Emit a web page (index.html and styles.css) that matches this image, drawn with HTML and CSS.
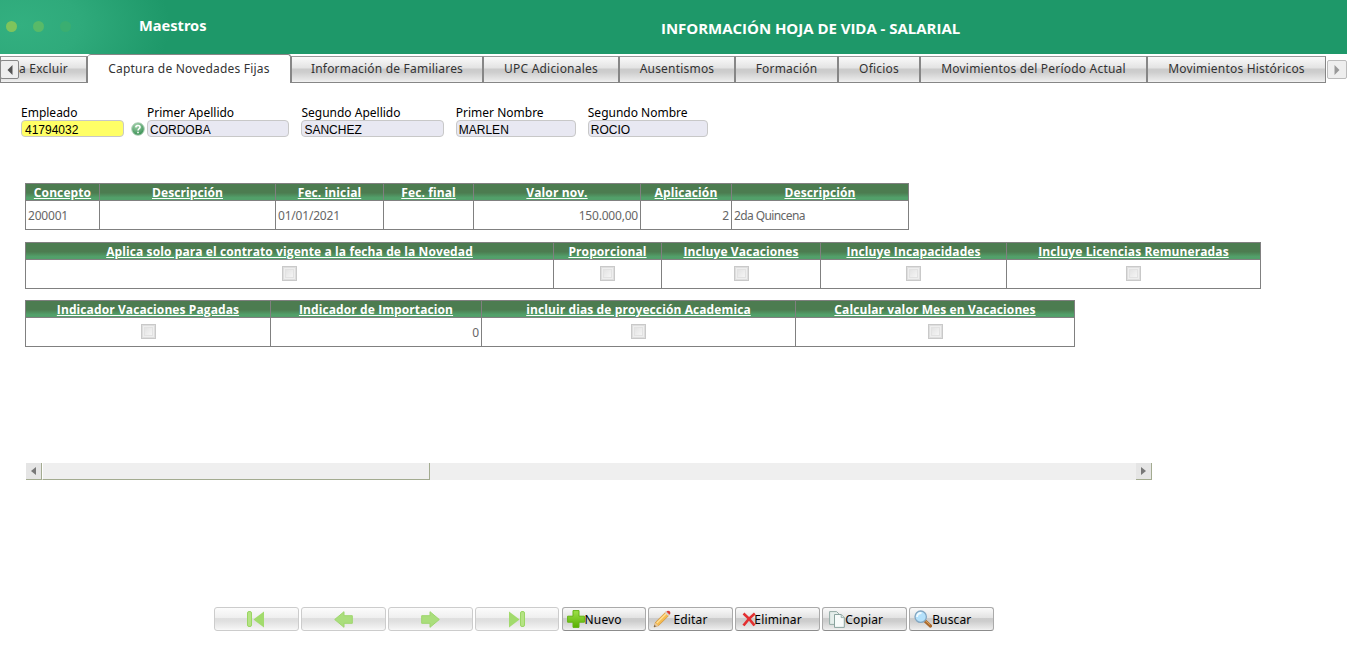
FILE: index.html
```html
<!DOCTYPE html>
<html lang="es">
<head>
  <meta charset="UTF-8" />
  <title>Información Hoja de Vida - Salarial</title>
  <link rel="stylesheet" href="styles.css">
</head>
<body>
  <header class="header">
    <div class="dots"><i></i><i></i><i></i></div>
    <div class="module">Maestros</div>
    <h1>INFORMACIÓN HOJA DE VIDA - SALARIAL</h1>
  </header>

  <nav class="tabs">
    <div class="tab w-excluir"><span>a Excluir</span></div>
    <div class="tab active w-captura"><span>Captura de Novedades Fijas</span></div>
    <div class="tab w-familiares"><span>Información de Familiares</span></div>
    <div class="tab w-upc"><span>UPC Adicionales</span></div>
    <div class="tab w-ausentismos"><span>Ausentismos</span></div>
    <div class="tab w-formacion"><span>Formación</span></div>
    <div class="tab w-oficios"><span>Oficios</span></div>
    <div class="tab w-periodo"><span>Movimientos del Período Actual</span></div>
    <div class="tab w-historicos"><span>Movimientos Históricos</span></div>
    <button class="tab-scroll prev"><svg width="6" height="10" viewBox="0 0 6 10"><path d="M5.5 0v10L.5 5z" fill="#555"/></svg></button>
    <button class="tab-scroll next"><svg width="6" height="10" viewBox="0 0 6 10"><path d="M.5 0v10l5-5z" fill="#999"/></svg></button>
  </nav>

  <form class="employee">
    <div class="field codigo">
      <label for="empleado">Empleado</label>
      <input id="empleado" value="41794032">
    </div>
    <svg class="help" width="14" height="14" viewBox="0 0 14 14">
      <defs>
        <radialGradient id="helpFill" cx=".4" cy=".25" r=".8">
          <stop offset="0" stop-color="#a5d3ae"/>
          <stop offset="1" stop-color="#2f8a4b"/>
        </radialGradient>
      </defs>
      <circle cx="7" cy="7" r="6.3" fill="url(#helpFill)" stroke="#b5d3bc"/>
      <path d="M4.8 5.4C4.9 2.7 9.3 2.9 9 5.3 8.8 6.8 7 6.8 7 8.6M7 9.7v1.6" fill="none" stroke="#fff" stroke-width="1.6"/>
    </svg>
    <div class="field apellido">
      <label for="apellido1">Primer Apellido</label>
      <input id="apellido1" value="CORDOBA" readonly>
    </div>
    <div class="field apellido">
      <label for="apellido2">Segundo Apellido</label>
      <input id="apellido2" value="SANCHEZ" readonly>
    </div>
    <div class="field nombre">
      <label for="nombre1">Primer Nombre</label>
      <input id="nombre1" value="MARLEN" readonly>
    </div>
    <div class="field nombre">
      <label for="nombre2">Segundo Nombre</label>
      <input id="nombre2" value="ROCIO" readonly>
    </div>
  </form>

  <main class="grid-area">
    <table class="data t-concepto">
      <colgroup><col class="c74"><col class="c176"><col class="c108"><col class="c90"><col class="c167"><col class="c91"><col class="c177"></colgroup>
      <tr>
        <th><span>Concepto</span></th>
        <th><span>Descripción</span></th>
        <th><span>Fec. inicial</span></th>
        <th><span>Fec. final</span></th>
        <th><span>Valor nov.</span></th>
        <th><span>Aplicación</span></th>
        <th><span>Descripción</span></th>
      </tr>
      <tr>
        <td>200001</td>
        <td></td>
        <td>01/01/2021</td>
        <td></td>
        <td class="num">150.000,00</td>
        <td class="num">2</td>
        <td class="txt">2da Quincena</td>
      </tr>
    </table>

    <table class="data t-incluye">
      <colgroup><col class="c528"><col class="c108"><col class="c159"><col class="c186"><col class="c254"></colgroup>
      <tr>
        <th><span>Aplica solo para el contrato vigente a la fecha de la Novedad</span></th>
        <th><span>Proporcional</span></th>
        <th><span>Incluye Vacaciones</span></th>
        <th><span>Incluye Incapacidades</span></th>
        <th><span>Incluye Licencias Remuneradas</span></th>
      </tr>
      <tr>
        <td><i class="check"></i></td>
        <td><i class="check"></i></td>
        <td><i class="check"></i></td>
        <td><i class="check"></i></td>
        <td><i class="check"></i></td>
      </tr>
    </table>

    <table class="data t-indicador">
      <colgroup><col class="c245"><col class="c211"><col class="c314"><col class="c279"></colgroup>
      <tr>
        <th><span>Indicador Vacaciones Pagadas</span></th>
        <th><span>Indicador de Importacion</span></th>
        <th><span>incluir dias de proyección Academica</span></th>
        <th><span>Calcular valor Mes en Vacaciones</span></th>
      </tr>
      <tr>
        <td><i class="check"></i></td>
        <td class="num">0</td>
        <td><i class="check"></i></td>
        <td><i class="check"></i></td>
      </tr>
    </table>
  </main>

  <div class="scrollbar">
    <div class="arrow"><svg width="5" height="8" viewBox="0 0 5 8"><path d="M5 0v8L0 4z" fill="#777"/></svg></div>
    <div class="thumb"></div>
    <div class="arrow right"><svg width="5" height="8" viewBox="0 0 5 8"><path d="M0 0v8l5-4z" fill="#777"/></svg></div>
  </div>

  <footer class="toolbar">
    <button class="btn nav" disabled>
      <svg width="18" height="17" viewBox="0 0 18 17"><rect x=".5" y=".5" width="4" height="15" rx="1.5" fill="#b5e384" stroke="#9ad663"/><path d="M17 .5v16L6.5 8.5z" fill="#a2db6d"/></svg>
    </button>
    <button class="btn nav" disabled>
      <svg width="19" height="17" viewBox="0 0 19 17"><path d="M.7 8.5L10 .7v4h8.3v7.6H10v4z" fill="#aade7c" stroke="#9ed66d"/></svg>
    </button>
    <button class="btn nav" disabled>
      <svg width="19" height="17" viewBox="0 0 19 17"><path d="M18.3 8.5L9 .7v4H.7v7.6H9v4z" fill="#aade7c" stroke="#9ed66d"/></svg>
    </button>
    <button class="btn nav" disabled>
      <svg width="18" height="17" viewBox="0 0 18 17"><path d="M1 .5v16l10.5-8z" fill="#a2db6d"/><rect x="12.5" y=".5" width="4" height="15" rx="1.5" fill="#b5e384" stroke="#9ad663"/></svg>
    </button>
    <button class="btn">
      <svg width="18" height="18" viewBox="0 0 18 18">
        <defs><linearGradient id="plusFill" x2="0" y2="1"><stop offset="0" stop-color="#9ee04a"/><stop offset="1" stop-color="#58b000"/></linearGradient></defs>
        <path d="M6 .6h6v5.6h5.4v6H12v5.2H6v-5.2H.6v-6H6z" fill="url(#plusFill)" stroke="#65b416"/>
      </svg>
      <span>Nuevo</span>
    </button>
    <button class="btn edit">
      <svg width="18" height="18" viewBox="0 0 18 18">
        <path d="M1 17l1.6-4.8L12.8 2l3.3 3.2L5.6 15.5z" fill="#f4bb50" stroke="#d08d34" stroke-width=".7"/>
        <path d="M3.8 13L13.6 3.2" stroke="#ffe09a" stroke-width="1.3"/>
        <path d="M1 17l1.3-4.2 3 2.9z" fill="#e7c8a0"/><path d="M1 17l.6-1.9 1.3 1.2z" fill="#444"/>
        <path d="M12 2.8l1-1 3.3 3.3-1 1z" fill="#d5d8df"/>
        <path d="M13.3 1.6Q15 0 16.7 1.3 18.1 3 16.5 4.8z" fill="#db3c31"/>
      </svg>
      <span>Editar</span>
    </button>
    <button class="btn del">
      <svg width="14" height="15" viewBox="0 0 14 15"><path d="M1.5 1.5Q7 6 12.5 13.5M12.8 1.5Q7 6 1.5 13.5" fill="none" stroke="#e32f31" stroke-width="2.7"/></svg>
      <span>Eliminar</span>
    </button>
    <button class="btn copy">
      <svg width="16" height="17" viewBox="0 0 16 17">
        <path d="M.6.6h7l2.3 2.3v10.5H.6z" fill="#e5eeeb" stroke="#93aaa5"/>
        <path d="M5.5 3.5h6.8l3 3v9.9H5.5z" fill="#f7fbfa" stroke="#8aa39e"/>
        <path d="M12.2 3.6v3h3" fill="#dce7e4" stroke="#8aa39e" stroke-width=".8"/>
      </svg>
      <span>Copiar</span>
    </button>
    <button class="btn find">
      <svg width="18" height="18" viewBox="0 0 18 18">
        <path d="M11 11l5.5 5" stroke="#a9682d" stroke-width="3.2" stroke-linecap="round"/>
        <path d="M11.4 10.7l4.6 4" stroke="#dda45a" stroke-width="1"/>
        <circle cx="6.7" cy="6.7" r="5.7" fill="#b4e1fb" stroke="#82a6c2" stroke-width="1.3"/>
        <path d="M3 7Q3.3 3 7.5 3" fill="none" stroke="#f0faff" stroke-width="1.8"/>
      </svg>
      <span>Buscar</span>
    </button>
  </footer>
</body>
</html>
```
FILE: styles.css
```css
* {
  box-sizing: border-box;
}

body {
  margin: 0;
  height: 658px;
  overflow: hidden;
  background: #fff;
  font-family: "Noto Sans", sans-serif;
  font-size: 12px;
  color: #000;
}

/* header */
.header {
  display: flex;
  height: 54px;
  background: radial-gradient(ellipse 150px 90px at 20px 25px, #33b080 0%, #2faa7b 40%, #1e9869 100%);
  color: #fff;
}

.dots {
  display: flex;
  gap: 16px;
  width: 139px;
  padding: 21px 0 0 6px;
}

.dots i {
  width: 11px;
  height: 11px;
  border-radius: 50%;
  background: #7fc45c;
}

.dots i:nth-child(2) {
  background: #58ba68;
}

.dots i:nth-child(3) {
  background: #3aae71;
}

.module {
  width: 522px;
  padding-top: 14px;
  font-size: 14.6px;
  line-height: 22px;
  font-weight: bold;
}

.header h1 {
  margin: 0;
  padding-top: 17px;
  font-family: "Open Sans", sans-serif;
  font-size: 15px;
  line-height: 22px;
  letter-spacing: -0.03px;
  white-space: nowrap;
}

/* tabs */
.tabs {
  position: relative;
  display: flex;
  height: 29px;
  padding-top: 2px;
}

.tab {
  flex: none;
  height: 27px;
  border: 1px solid #868686;
  border-top-color: #999;
  background: linear-gradient(#fafafa 0%, #e3e3e3 44%, #cbcbcb 48%, #cdcdcd 60%, #e8e8e8 92%, #f3f3f3 100%);
  color: #333;
  font-size: 12px;
  line-height: 23px;
  letter-spacing: 0.2px;
  text-align: center;
  white-space: nowrap;
}

.tab.active {
  height: 29px;
  margin-top: -2px;
  border-width: 1px 1px 0 0;
  border-color: #868686;
  border-radius: 3px 3px 0 0;
  background: #fff;
  line-height: 27px;
}

.w-excluir { width: 88px; border-right-width: 2px; }
.w-captura { width: 203px; }
.w-familiares { width: 192px; }
.w-upc { width: 136px; }
.w-ausentismos { width: 116px; }
.w-formacion { width: 103px; }
.w-oficios { width: 82px; }
.w-periodo { width: 227px; }
.w-historicos { width: 179px; }

.tab-scroll {
  position: absolute;
  top: 6px;
  display: flex;
  align-items: center;
  justify-content: center;
  width: 19px;
  height: 19px;
  padding: 0;
  border: 1px solid #888;
  border-radius: 2px;
  background: #eee;
}

.prev {
  left: 0;
}

.next {
  right: 0;
  width: 20px;
  border-color: #bbb;
}

/* employee data */
.employee {
  display: flex;
  align-items: flex-end;
  gap: 12px;
  height: 54px;
  padding-left: 21px;
}

.field {
  display: flex;
  flex-direction: column;
}

.field label {
  line-height: 15px;
  white-space: nowrap;
}

.field input {
  width: 100%;
  height: 17px;
  padding: 2px 2px 0;
  border: 1px solid #c8c8c8;
  border-radius: 4px;
  background: #e8e8f2;
  font-family: "Liberation Sans", Arial, sans-serif;
  font-size: 12px;
  color: #000;
}

.codigo {
  width: 103px;
}

.field.codigo input {
  padding-left: 3px;
  background: #ff6;
}

.help {
  margin: 0 -10px 1px -5px;
}

.apellido {
  width: 142.4px;
}

.nombre {
  width: 120px;
}

/* tables */
.grid-area {
  height: 326px;
  padding: 46px 0 0 25px;
}

.data {
  table-layout: fixed;
  border-collapse: separate;
  border-spacing: 0;
  margin-bottom: 12px;
  border: solid #808080;
  border-width: 1px 0 0 1px;
}

.data th,
.data td {
  padding: 0 2px;
  border: solid #808080;
  border-width: 0 1px 1px 0;
  white-space: nowrap;
}

.data th {
  height: 17px;
  padding-top: 1px;
  background: linear-gradient(#4c7c50 0%, #4c7c50 55%, #52a06a 85%, #52a06a 100%);
  color: #fff;
  font-family: "Open Sans", sans-serif;
  font-size: 12px;
  line-height: 15px;
  letter-spacing: 0.1px;
  text-decoration: underline;
}

.data td {
  height: 29px;
  padding-top: 2px;
  color: #666;
  font-size: 12px;
  line-height: 16px;
  letter-spacing: -0.2px;
}

.data .num {
  text-align: right;
}

.data .txt {
  letter-spacing: -0.6px;
}

.t-concepto { width: 884px; }
.t-incluye { width: 1236px; margin-bottom: 11px; }
.t-indicador { width: 1050px; }

.c74 { width: 74px; }
.c90 { width: 90px; }
.c91 { width: 91px; }
.c108 { width: 108px; }
.c159 { width: 159px; }
.c167 { width: 167px; }
.c176 { width: 176px; }
.c177 { width: 177px; }
.c186 { width: 186px; }
.c211 { width: 211px; }
.c245 { width: 245px; }
.c254 { width: 254px; }
.c279 { width: 279px; }
.c314 { width: 314px; }
.c528 { width: 528px; }

.check {
  display: block;
  width: 15px;
  height: 15px;
  margin: -4px auto 0;
  border: 1px solid #c9c9c9;
  background: linear-gradient(135deg, #dcdcdc, #fcfcfc);
  box-shadow: inset 0 0 0 1px #dedede, inset 0 0 0 2px #eee, inset 0 0 0 3px #e2e2e2;
}

/* scrollbar */
.scrollbar {
  display: flex;
  width: 1126px;
  height: 17px;
  margin-left: 26px;
  background: #efefef;
}

.arrow {
  display: flex;
  align-items: center;
  justify-content: center;
  width: 16px;
  border: 1px solid #a3ab90;
  border-width: 0 1px 1px 0;
  background: #e5e5e5;
}

.thumb {
  width: 388px;
  border: solid #a3ab90;
  border-width: 0 1px 1px 0;
  border-left: 1px solid #fff;
}

.arrow.right {
  margin-left: auto;
}

/* buttons */
.toolbar {
  display: flex;
  gap: 2.1px;
  margin: 127px 0 0 214px;
}

.btn {
  display: flex;
  align-items: center;
  width: 84.8px;
  height: 24px;
  padding: 0 0 0 4px;
  border: 1px solid #aaa;
  border-bottom-color: #8c8c8c;
  border-radius: 3px;
  background: linear-gradient(#fafafa 0%, #e3e3e3 44%, #cbcbcb 48%, #cdcdcd 60%, #e8e8e8 92%, #f3f3f3 100%);
  font-family: "Noto Sans", sans-serif;
  font-size: 12px;
  letter-spacing: 0.15px;
  color: #000;
  white-space: nowrap;
}

.btn svg {
  flex: none;
}

.btn.nav {
  justify-content: center;
  padding: 0;
  border-color: #ccc;
  background: linear-gradient(#fcfcfc 0%, #efefef 44%, #dedede 48%, #e0e0e0 60%, #f2f2f2 92%, #f9f9f9 100%);
}

.edit span {
  margin-left: 2px;
}

.del {
  padding-left: 6px;
}

.del span {
  margin-left: -2px;
}

.copy {
  padding-left: 6px;
}
```
